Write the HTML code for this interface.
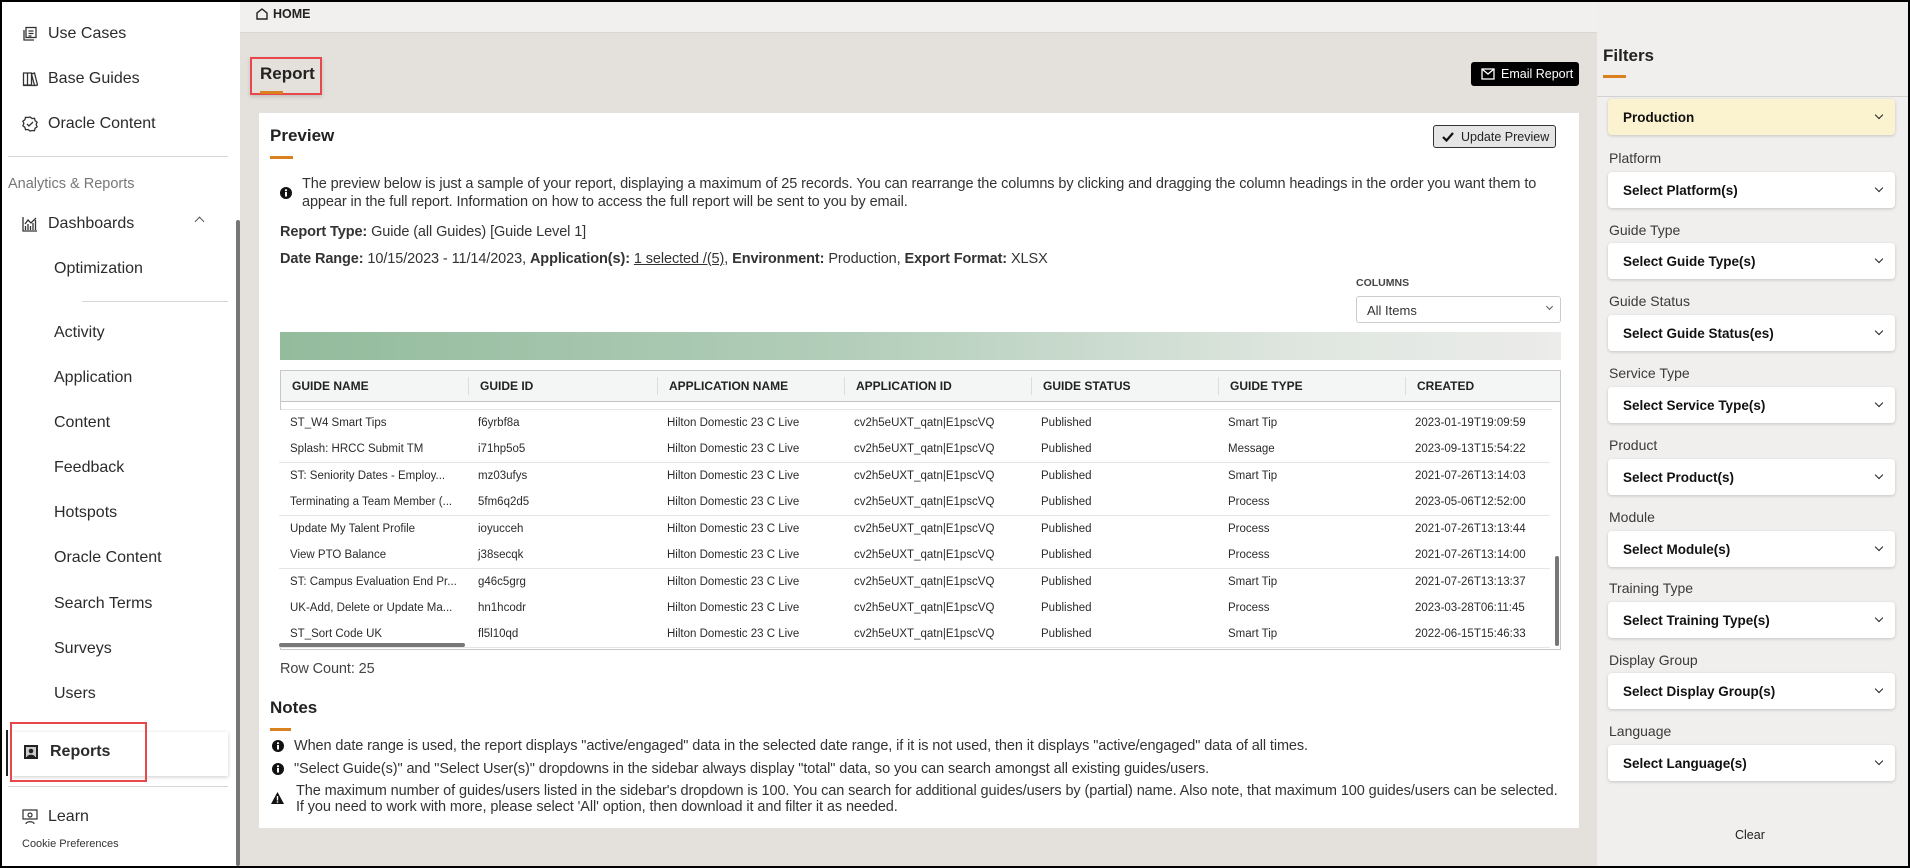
<!DOCTYPE html>
<html><head><meta charset="utf-8"><style>
*{box-sizing:border-box;margin:0;padding:0}
body{width:1910px;height:868px;overflow:hidden;background:#000;font-family:"Liberation Sans",sans-serif;color:#2b2b2b;position:relative}
.a{position:absolute;white-space:nowrap}
#frame{position:absolute;left:2px;top:2px;width:1906px;height:864px;background:#e4e1dc;overflow:hidden}
#side{position:absolute;left:0;top:0;width:238px;height:864px;background:#fff}
.si{position:absolute;font-size:16px;color:#2b2b2b;white-space:nowrap}
.sub{left:52px}
.ic{position:absolute;left:20px;width:16px;height:16px}
#hdr{position:absolute;left:238px;top:0;width:1358px;height:31px;background:#f1f0ee;border-bottom:1px solid #d8d6d2}
#right{position:absolute;left:1595px;top:0;width:311px;height:864px;background:#f1efed}
.lbl{position:absolute;left:12px;font-size:14px;color:#3a3a3a}
.dd{position:absolute;left:11px;width:287px;height:36px;background:#fff;border-radius:4px;box-shadow:0 1px 3px rgba(0,0,0,.18);font-size:13.5px;font-weight:bold;color:#111;padding:11px 0 0 15px}
.dd:after{content:"";position:absolute;right:13px;top:13px;width:5px;height:5px;border-right:1.6px solid #222;border-bottom:1.6px solid #222;transform:rotate(45deg)}
#card{position:absolute;left:257px;top:111px;width:1320px;height:715px;background:#fff}
.t{font-size:14.5px;color:#333;letter-spacing:-0.1px}
.th{position:absolute;top:377px;font-size:12px;font-weight:bold;color:#222}
.row{position:absolute;left:279px;width:1271px;height:27px;border-bottom:1px solid #e3e6e8;background:#fff}
.cell{position:absolute;font-size:11.5px;color:#2b2b2b;white-space:nowrap}
</style></head><body>
<div id="frame">
<div id="side">
 <svg class="ic" style="top:24px" viewBox="0 0 16 16" fill="none" stroke="#333" stroke-width="1.3"><rect x="4" y="1.5" width="10" height="10"/><path d="M2 4v10h10M6.5 5h5M6.5 7.5h5M6.5 10h3"/></svg>
 <div class="si" style="left:46px;top:23px">Use Cases</div>
 <svg class="ic" style="top:69px" viewBox="0 0 16 16" fill="none" stroke="#333" stroke-width="1.3"><path d="M1.5 2h4v12h-4zM5.5 2h4v12h-4zM9.5 3l3-1 3 12-3 .5zM1 14.5h14"/></svg>
 <div class="si" style="left:46px;top:68px">Base Guides</div>
 <svg class="ic" style="top:114px" viewBox="0 0 16 16" fill="none" stroke="#333" stroke-width="1.3"><path d="M8 1l2 1.5 2.5-.2.6 2.4 2 1.5-1 2.3 1 2.3-2 1.5-.6 2.4-2.5-.2L8 15l-2-1.5-2.5.2-.6-2.4-2-1.5 1-2.3-1-2.3 2-1.5.6-2.4 2.5.2z"/><path d="M5 8l2 2 4-4"/></svg>
 <div class="si" style="left:46px;top:113px">Oracle Content</div>
 <div class="a" style="left:6px;top:154px;width:220px;height:1px;background:#d6d6d6"></div>
 <div class="si" style="left:6px;top:174px;font-size:14.5px;color:#777">Analytics &amp; Reports</div>
 <svg class="ic" style="top:214px" viewBox="0 0 16 16" fill="none" stroke="#333" stroke-width="1.3"><path d="M1 1v14h14M3.5 14V10M6 14V8M8.5 14V10M11 14V7M13.5 14V4M3 8l3-4 3 3 5-5"/></svg>
 <div class="si" style="left:46px;top:213px">Dashboards</div>
 <div class="a" style="left:194px;top:216px;width:7px;height:7px;border-left:1.3px solid #555;border-top:1.3px solid #555;transform:rotate(45deg)"></div>
 <div class="si sub" style="top:258px">Optimization</div>
 <div class="a" style="left:80px;top:299px;width:146px;height:1px;background:#d6d6d6"></div>
 <div class="si sub" style="top:322px">Activity</div>
 <div class="si sub" style="top:367px">Application</div>
 <div class="si sub" style="top:412px">Content</div>
 <div class="si sub" style="top:457px">Feedback</div>
 <div class="si sub" style="top:502px">Hotspots</div>
 <div class="si sub" style="top:547px">Oracle Content</div>
 <div class="si sub" style="top:593px">Search Terms</div>
 <div class="si sub" style="top:638px">Surveys</div>
 <div class="si sub" style="top:683px">Users</div>
 <div class="a" style="left:10px;top:730px;width:216px;height:44px;background:#fff;box-shadow:0 1px 4px rgba(0,0,0,.2)"></div>
 <div class="a" style="left:4px;top:728px;width:2px;height:46px;background:#222"></div>
 <div class="a" style="left:8px;top:720px;width:137px;height:60px;border:2px solid #e8474c"></div>
 <svg class="a" style="left:21px;top:742px;width:16px;height:16px" viewBox="0 0 16 16"><rect x="1" y="1" width="14" height="14" fill="#222"/><rect x="3" y="3" width="10" height="10" fill="#ccc"/><circle cx="8" cy="7" r="2.3" fill="#222"/><path d="M4 13c0-3 8-3 8 0z" fill="#222"/></svg>
 <div class="si" style="left:48px;top:741px;font-weight:bold">Reports</div>
 <div class="a" style="left:6px;top:784px;width:220px;height:1px;background:#d6d6d6"></div>
 <svg class="ic" style="top:807px" viewBox="0 0 16 16" fill="none" stroke="#333" stroke-width="1.2"><path d="M1 1h14v9H1z"/><circle cx="8" cy="6" r="2"/><path d="M4 15c0-3 8-3 8 0"/></svg>
 <div class="si" style="left:46px;top:806px">Learn</div>
 <div class="si" style="left:20px;top:836px;font-size:11px;color:#333">Cookie Preferences</div>
 <div class="a" style="left:234px;top:218px;width:4px;height:646px;background:#777;border-radius:2px"></div>
</div>

<div id="hdr">
 <svg class="a" style="left:16px;top:6px;width:12px;height:12px" viewBox="0 0 12 12" fill="none" stroke="#222" stroke-width="1.4"><path d="M1 11V5l5-4 5 4v6z"/></svg>
 <div class="a" style="left:33px;top:5px;font-size:12.5px;font-weight:bold;color:#222">HOME</div>
</div>

<div class="a" style="left:248px;top:55px;width:72px;height:38px;border:2px solid #e8474c;box-shadow:0 2px 4px rgba(0,0,0,.15)"></div>
<div class="a" style="left:258px;top:62px;font-size:17px;font-weight:bold;color:#222">Report</div>
<div class="a" style="left:258px;top:89px;width:23px;height:3px;background:#d9801f"></div>
<div class="a" style="left:1469px;top:60px;width:108px;height:24px;background:#000;border-radius:3px;color:#fff;font-size:12.5px;padding:5px 0 0 30px">Email Report</div>
<svg class="a" style="left:1479px;top:66px;width:14px;height:12px" viewBox="0 0 14 12" fill="none" stroke="#fff" stroke-width="1.3"><rect x="1" y="1" width="12" height="10"/><path d="M1 1l6 5 6-5"/></svg>

<div id="card"></div>
<div class="a" style="left:268px;top:124px;font-size:17px;font-weight:bold;color:#222">Preview</div>
<div class="a" style="left:268px;top:154px;width:23px;height:3px;background:#d9801f"></div>
<div class="a" style="left:1431px;top:123px;width:123px;height:23px;border:1px solid #333;border-radius:3px;background:#e5e5e5;font-size:12.5px;color:#222;padding:4px 0 0 27px">Update Preview</div>
<svg class="a" style="left:1440px;top:129px;width:12px;height:11px" viewBox="0 0 12 11"><path d="M1 6l3.5 3.5L11 2" fill="none" stroke="#111" stroke-width="2.2"/></svg>
<svg class="a" style="left:278px;top:185px;width:12px;height:12px" viewBox="0 0 12 12"><circle cx="6" cy="6" r="6" fill="#111"/><rect x="5" y="5" width="2" height="4.5" fill="#fff"/><circle cx="6" cy="3.2" r="1.1" fill="#fff"/></svg>
<div class="a t" style="left:300px;top:174px">The preview below is just a sample of your report, displaying a maximum of 25 records. You can rearrange the columns by clicking and dragging the column headings in the order you want them to</div>
<div class="a t" style="left:300px;top:192px">appear in the full report. Information on how to access the full report will be sent to you by email.</div>
<div class="a t" style="left:278px;top:222px"><b>Report Type:</b> Guide (all Guides) [Guide Level 1]</div>
<div class="a t" style="left:278px;top:249px"><b>Date Range:</b> 10/15/2023 - 11/14/2023, <b>Application(s):</b> <u>1 selected /(5)</u>, <b>Environment:</b> Production, <b>Export Format:</b> XLSX</div>
<div class="a" style="left:1354px;top:275px;font-size:10.5px;font-weight:bold;color:#444">COLUMNS</div>
<div class="a" style="left:1354px;top:294px;width:205px;height:27px;border:1px solid #ccc;border-radius:3px;font-size:13px;color:#333;padding:6px 0 0 10px">All Items</div>
<div class="a" style="left:1545px;top:302px;width:5px;height:5px;border-right:1.3px solid #555;border-bottom:1.3px solid #555;transform:rotate(45deg)"></div>
<div class="a" style="left:278px;top:330px;width:1281px;height:28px;background:linear-gradient(90deg,#93bb9c,#b3ceba 45%,#dfe6e0 80%,#ececea)"></div>

<div class="a" style="left:278px;top:368px;width:1281px;height:280px;border:1px solid #c8c8c8;background:#fff"></div>
<div class="a" style="left:279px;top:369px;width:1279px;height:31px;background:#f4f5f5;border-bottom:1px solid #c4c4c4"></div>
<div class="th" style="left:290px">GUIDE NAME</div>
<div class="th" style="left:478px">GUIDE ID</div>
<div class="th" style="left:667px">APPLICATION NAME</div>
<div class="th" style="left:854px">APPLICATION ID</div>
<div class="th" style="left:1041px">GUIDE STATUS</div>
<div class="th" style="left:1228px">GUIDE TYPE</div>
<div class="th" style="left:1415px">CREATED</div>
<div class="a" style="left:466px;top:375px;width:1px;height:18px;background:#ddd"></div>
<div class="a" style="left:655px;top:375px;width:1px;height:18px;background:#ddd"></div>
<div class="a" style="left:842px;top:375px;width:1px;height:18px;background:#ddd"></div>
<div class="a" style="left:1029px;top:375px;width:1px;height:18px;background:#ddd"></div>
<div class="a" style="left:1216px;top:375px;width:1px;height:18px;background:#ddd"></div>
<div class="a" style="left:1403px;top:375px;width:1px;height:18px;background:#ddd"></div>
<div class="a" style="left:279px;top:401px;width:1271px;height:7px;border-bottom:1px solid #e3e6e8"></div>

<div class="a" style="left:1553px;top:554px;width:4px;height:90px;background:#777;border-radius:2px"></div>
<div class="a t" style="left:278px;top:659px;color:#444">Row Count: 25</div>

<div class="a" style="left:268px;top:696px;font-size:17px;font-weight:bold;color:#222">Notes</div>
<div class="a" style="left:268px;top:726px;width:21px;height:3px;background:#d9801f"></div>
<svg class="a" style="left:270px;top:738px;width:12px;height:12px" viewBox="0 0 12 12"><circle cx="6" cy="6" r="6" fill="#111"/><rect x="5" y="5" width="2" height="4.5" fill="#fff"/><circle cx="6" cy="3.2" r="1.1" fill="#fff"/></svg>
<div class="a t" style="left:292px;top:736px">When date range is used, the report displays "active/engaged" data in the selected date range, if it is not used, then it displays "active/engaged" data of all times.</div>
<svg class="a" style="left:270px;top:761px;width:12px;height:12px" viewBox="0 0 12 12"><circle cx="6" cy="6" r="6" fill="#111"/><rect x="5" y="5" width="2" height="4.5" fill="#fff"/><circle cx="6" cy="3.2" r="1.1" fill="#fff"/></svg>
<div class="a t" style="left:292px;top:759px">"Select Guide(s)" and "Select User(s)" dropdowns in the sidebar always display "total" data, so you can search amongst all existing guides/users.</div>
<svg class="a" style="left:269px;top:790px;width:13px;height:12px" viewBox="0 0 13 12"><path d="M6.5 0L13 12H0z" fill="#111"/><rect x="5.8" y="4" width="1.4" height="4.5" fill="#fff"/><rect x="5.8" y="9.3" width="1.4" height="1.4" fill="#fff"/></svg>
<div class="a t" style="left:294px;top:781px">The maximum number of guides/users listed in the sidebar's dropdown is 100. You can search for additional guides/users by (partial) name. Also note, that maximum 100 guides/users can be selected.</div>
<div class="a t" style="left:294px;top:797px">If you need to work with more, please select 'All' option, then download it and filter it as needed.</div>

<div id="right">
 <div class="a" style="left:6px;top:44px;font-size:17px;font-weight:bold;color:#222">Filters</div>
 <div class="a" style="left:6px;top:73px;width:23px;height:3px;background:#d9801f"></div>
 <div class="a" style="left:0;top:94px;width:311px;height:1px;background:#d4d2cf"></div>
 <div class="dd" style="top:97px;background:#fbf2cf">Production</div>
 <div class="lbl" style="top:148px">Platform</div><div class="dd" style="top:170px">Select Platform(s)</div>
 <div class="lbl" style="top:220px">Guide Type</div><div class="dd" style="top:241px">Select Guide Type(s)</div>
 <div class="lbl" style="top:291px">Guide Status</div><div class="dd" style="top:313px">Select Guide Status(es)</div>
 <div class="lbl" style="top:363px">Service Type</div><div class="dd" style="top:385px">Select Service Type(s)</div>
 <div class="lbl" style="top:435px">Product</div><div class="dd" style="top:457px">Select Product(s)</div>
 <div class="lbl" style="top:507px">Module</div><div class="dd" style="top:529px">Select Module(s)</div>
 <div class="lbl" style="top:578px">Training Type</div><div class="dd" style="top:600px">Select Training Type(s)</div>
 <div class="lbl" style="top:650px">Display Group</div><div class="dd" style="top:671px">Select Display Group(s)</div>
 <div class="lbl" style="top:721px">Language</div><div class="dd" style="top:743px">Select Language(s)</div>
 <div class="a" style="left:138px;top:826px;font-size:12.5px;color:#222">Clear</div>
</div>
</div>
<div style="position:absolute;left:0;top:0">
<div class="row" style="top:410px"><span class="cell" style="left:11px;top:7px">ST_W4 Smart Tips</span><span class="cell" style="left:199px;top:7px">f6yrbf8a</span><span class="cell" style="left:388px;top:7px">Hilton Domestic 23 C Live</span><span class="cell" style="left:575px;top:7px">cv2h5eUXT_qatn|E1pscVQ</span><span class="cell" style="left:762px;top:7px">Published</span><span class="cell" style="left:949px;top:7px">Smart Tip</span><span class="cell" style="left:1136px;top:7px">2023-01-19T19:09:59</span></div>
<div class="row" style="top:436px"><span class="cell" style="left:11px;top:7px">Splash: HRCC Submit TM</span><span class="cell" style="left:199px;top:7px">i71hp5o5</span><span class="cell" style="left:388px;top:7px">Hilton Domestic 23 C Live</span><span class="cell" style="left:575px;top:7px">cv2h5eUXT_qatn|E1pscVQ</span><span class="cell" style="left:762px;top:7px">Published</span><span class="cell" style="left:949px;top:7px">Message</span><span class="cell" style="left:1136px;top:7px">2023-09-13T15:54:22</span></div>
<div class="row" style="top:463px"><span class="cell" style="left:11px;top:7px">ST: Seniority Dates - Employ...</span><span class="cell" style="left:199px;top:7px">mz03ufys</span><span class="cell" style="left:388px;top:7px">Hilton Domestic 23 C Live</span><span class="cell" style="left:575px;top:7px">cv2h5eUXT_qatn|E1pscVQ</span><span class="cell" style="left:762px;top:7px">Published</span><span class="cell" style="left:949px;top:7px">Smart Tip</span><span class="cell" style="left:1136px;top:7px">2021-07-26T13:14:03</span></div>
<div class="row" style="top:489px"><span class="cell" style="left:11px;top:7px">Terminating a Team Member (...</span><span class="cell" style="left:199px;top:7px">5fm6q2d5</span><span class="cell" style="left:388px;top:7px">Hilton Domestic 23 C Live</span><span class="cell" style="left:575px;top:7px">cv2h5eUXT_qatn|E1pscVQ</span><span class="cell" style="left:762px;top:7px">Published</span><span class="cell" style="left:949px;top:7px">Process</span><span class="cell" style="left:1136px;top:7px">2023-05-06T12:52:00</span></div>
<div class="row" style="top:516px"><span class="cell" style="left:11px;top:7px">Update My Talent Profile</span><span class="cell" style="left:199px;top:7px">ioyucceh</span><span class="cell" style="left:388px;top:7px">Hilton Domestic 23 C Live</span><span class="cell" style="left:575px;top:7px">cv2h5eUXT_qatn|E1pscVQ</span><span class="cell" style="left:762px;top:7px">Published</span><span class="cell" style="left:949px;top:7px">Process</span><span class="cell" style="left:1136px;top:7px">2021-07-26T13:13:44</span></div>
<div class="row" style="top:542px"><span class="cell" style="left:11px;top:7px">View PTO Balance</span><span class="cell" style="left:199px;top:7px">j38secqk</span><span class="cell" style="left:388px;top:7px">Hilton Domestic 23 C Live</span><span class="cell" style="left:575px;top:7px">cv2h5eUXT_qatn|E1pscVQ</span><span class="cell" style="left:762px;top:7px">Published</span><span class="cell" style="left:949px;top:7px">Process</span><span class="cell" style="left:1136px;top:7px">2021-07-26T13:14:00</span></div>
<div class="row" style="top:569px"><span class="cell" style="left:11px;top:7px">ST: Campus Evaluation End Pr...</span><span class="cell" style="left:199px;top:7px">g46c5grg</span><span class="cell" style="left:388px;top:7px">Hilton Domestic 23 C Live</span><span class="cell" style="left:575px;top:7px">cv2h5eUXT_qatn|E1pscVQ</span><span class="cell" style="left:762px;top:7px">Published</span><span class="cell" style="left:949px;top:7px">Smart Tip</span><span class="cell" style="left:1136px;top:7px">2021-07-26T13:13:37</span></div>
<div class="row" style="top:595px"><span class="cell" style="left:11px;top:7px">UK-Add, Delete or Update Ma...</span><span class="cell" style="left:199px;top:7px">hn1hcodr</span><span class="cell" style="left:388px;top:7px">Hilton Domestic 23 C Live</span><span class="cell" style="left:575px;top:7px">cv2h5eUXT_qatn|E1pscVQ</span><span class="cell" style="left:762px;top:7px">Published</span><span class="cell" style="left:949px;top:7px">Process</span><span class="cell" style="left:1136px;top:7px">2023-03-28T06:11:45</span></div>
<div class="row" style="top:621px"><span class="cell" style="left:11px;top:7px">ST_Sort Code UK</span><span class="cell" style="left:199px;top:7px">fl5l10qd</span><span class="cell" style="left:388px;top:7px">Hilton Domestic 23 C Live</span><span class="cell" style="left:575px;top:7px">cv2h5eUXT_qatn|E1pscVQ</span><span class="cell" style="left:762px;top:7px">Published</span><span class="cell" style="left:949px;top:7px">Smart Tip</span><span class="cell" style="left:1136px;top:7px">2022-06-15T15:46:33</span></div>
<div class="a" style="left:279px;top:643px;width:186px;height:4px;background:#777;border-radius:2px"></div>
</div>
</body></html>
